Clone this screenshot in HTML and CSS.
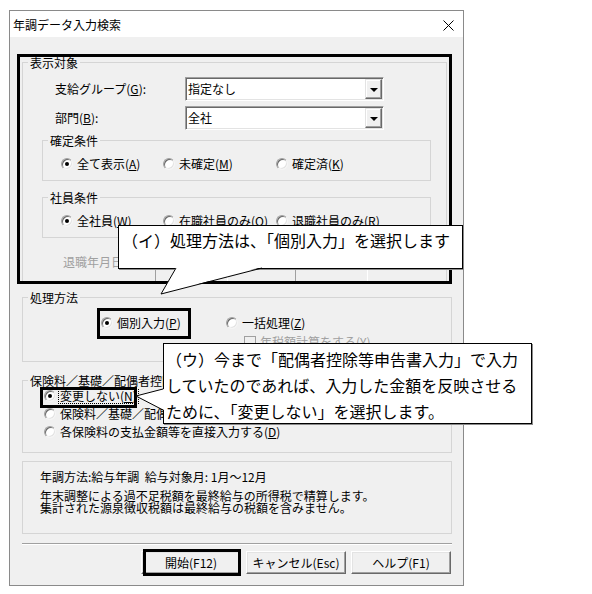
FILE: index.html
```html
<!DOCTYPE html>
<html lang="ja">
<head>
<meta charset="utf-8">
<title>年調データ入力検索</title>
<link rel="stylesheet" href="styles.css">
</head>
<body>
<div class="window">
  <div class="titlebar">
    <span class="title">年調データ入力検索</span>
    <svg class="close" width="11" height="11" viewBox="0 0 11 11"><path d="M0.5 0.5L10.5 10.5M10.5 0.5L0.5 10.5" stroke="#000" stroke-width="1" fill="none"/></svg>
  </div>
  <div class="client">
    <div class="focus-frame">
      <div class="group g-target">
        <span class="group-title">表示対象</span>
        <div class="field-row">
          <span class="field-label">支給グループ(<u>G</u>):</span>
          <div class="combo"><span class="combo-text">指定なし</span><span class="combo-btn"><i class="arrow"></i></span></div>
        </div>
        <div class="field-row row-gap">
          <span class="field-label">部門(<u>B</u>):</span>
          <div class="combo"><span class="combo-text">全社</span><span class="combo-btn"><i class="arrow"></i></span></div>
        </div>
        <div class="group sub-group sg-first">
          <span class="group-title">確定条件</span>
          <div class="radio-row">
            <span class="opt opt-a"><span class="radio checked"></span><span>全て表示(<u>A</u>)</span></span>
            <span class="opt opt-b"><span class="radio"></span><span>未確定(<u>M</u>)</span></span>
            <span class="opt"><span class="radio"></span><span>確定済(<u>K</u>)</span></span>
          </div>
        </div>
        <div class="group sub-group sg-second">
          <span class="group-title">社員条件</span>
          <div class="radio-row">
            <span class="opt opt-a"><span class="radio checked"></span><span>全社員(<u>W</u>)</span></span>
            <span class="opt opt-b"><span class="radio"></span><span>在職社員のみ(<u>Q</u>)</span></span>
            <span class="opt"><span class="radio"></span><span>退職社員のみ(<u>R</u>)</span></span>
          </div>
        </div>
        <div class="date-row">
          <span class="date-label">退職年月日</span>
          <span class="date-field"></span><span class="date-btn"></span>
          <span class="date-sep">～</span>
          <span class="date-field"></span><span class="date-btn"></span>
        </div>
      </div>
    </div>

    <div class="group g-method">
      <span class="group-title">処理方法</span>
      <div class="radio-row">
        <span class="opt opt-p"><span class="radio checked"></span><span>個別入力(<u>P</u>)</span></span>
        <span class="opt"><span class="radio"></span><span>一括処理(<u>Z</u>)</span></span>
      </div>
      <div class="check-row">
        <span class="checkbox"></span><span class="disabled">年税額計算をする(<u>Y</u>)</span>
      </div>
    </div>

    <div class="group g-ins">
      <span class="group-title">保険料／基礎／配偶者控除等の入力方法</span>
      <div class="radio-col">
        <span class="opt"><span class="radio checked"></span><span class="focus-text">変更しない(<u>N</u>)</span></span>
        <span class="opt"><span class="radio"></span><span>保険料／基礎／配偶者控除等申告書の入力内容を反映する(<u>S</u>)</span></span>
        <span class="opt"><span class="radio"></span><span>各保険料の支払金額等を直接入力する(<u>D</u>)</span></span>
      </div>
    </div>

    <div class="group g-info">
      <div class="info-line">年調方法:給与年調  給与対象月: 1月～12月</div>
      <div class="info-note">年末調整による過不足税額を最終給与の所得税で精算します。<br>集計された源泉徴収税額は最終給与の税額を含みません。</div>
    </div>

    <div class="separator"></div>

    <div class="buttons">
      <span class="btn">開始(F12)</span>
      <span class="btn">キャンセル(Esc)</span>
      <span class="btn">ヘルプ(F1)</span>
    </div>
  </div>
</div>

<div class="hl hl-p"></div>
<div class="hl hl-n"></div>
<div class="hl hl-start"></div>

<div class="callout callout-i">（イ）処理方法は、「個別入力」を選択します</div>
<svg class="tail tail-i" width="120" height="34" viewBox="0 0 120 34">
  <polygon points="21,0 6,27 107,0" fill="#fff"/>
  <polyline points="21,1 6,27 107,1" fill="none" stroke="#000" stroke-width="1"/>
</svg>

<div class="callout callout-u">（ウ）今まで「配偶者控除等申告書入力」で入力<br>していたのであれば、入力した金額を反映させる<br>ために、「変更しない」を選択します。</div>
<svg class="tail tail-u" width="32" height="30" viewBox="0 0 32 30">
  <polygon points="29,5 1,12 29,26" fill="#fff"/>
  <polyline points="28,5 1,12 28,26" fill="none" stroke="#000" stroke-width="1"/>
</svg>
</body>
</html>
```

FILE: styles.css
```css
* { box-sizing: border-box; }

html, body {
  margin: 0;
  padding: 0;
  background: #fff;
}

body {
  width: 592px;
  height: 594px;
  overflow: hidden;
  position: relative;
  font-family: "Noto Sans CJK JP", "Noto Sans", sans-serif;
  font-size: 12px;
  line-height: 16px;
  color: #000;
}

u { text-decoration: underline; text-underline-offset: 1px; }

.window {
  margin: 10px 0 0 9px;
  width: 455px;
  height: 576px;
  border: 1px solid #8a8a8a;
  background: #f0f0f0;
  display: flex;
  flex-direction: column;
}

.titlebar {
  height: 26px;
  flex-shrink: 0;
  background: #fff;
  display: flex;
  align-items: center;
  padding: 2px 0 0 3px;
}

.title { font-size: 12px; }

.close { margin-left: auto; margin-right: 9px; }

.client {
  display: flex;
  flex-direction: column;
  padding-bottom: 11px;
}

/* black highlight around 表示対象 */
.focus-frame {
  margin: 17px 0 0 7px;
  width: 435px;
  height: 230px;
  border: 3px solid #000;
  overflow: hidden;
  flex-shrink: 0;
}

.group {
  position: relative;
  border: 1px solid #d5d5d5;
}

.group-title {
  position: absolute;
  top: -8px;
  left: 5px;
  padding: 0 2px;
  background: #f0f0f0;
  line-height: 16px;
  white-space: nowrap;
}

.g-target {
  margin: 5px 2px 0 2px;
  border-bottom: none;
  padding: 14px 0 0 32px;
  height: 240px;
}

.field-row {
  display: flex;
  align-items: center;
  height: 24px;
}

.row-gap { margin-top: 5px; }

.field-label { width: 130px; flex-shrink: 0; }

.combo {
  width: 199px;
  height: 24px;
  background: #fff;
  border: 1px solid;
  border-color: #a0a0a0 #fff #fff #a0a0a0;
  box-shadow: inset 1px 1px 0 #696969, inset -1px -1px 0 #e3e3e3;
  display: flex;
  align-items: center;
  padding: 1px;
}

.combo-text { flex: 1; padding-left: 1px; }

.combo-btn {
  width: 17px;
  height: 20px;
  background: #f0f0f0;
  border: 1px solid;
  border-color: #e3e3e3 #696969 #696969 #e3e3e3;
  box-shadow: inset -1px -1px 0 #a0a0a0, inset 1px 1px 0 #fff;
  display: flex;
  align-items: center;
  justify-content: center;
}

.arrow {
  width: 0;
  height: 0;
  border-left: 4px solid transparent;
  border-right: 4px solid transparent;
  border-top: 4px solid #000;
  margin-top: 1px;
}

.sub-group {
  height: 41px;
  padding: 15px 0 0 18px;
}

.g-target .sub-group { margin-left: -13px; margin-right: 15px; }

.sg-first { margin-top: 10px; }
.sg-second { margin-top: 16px; }

.radio-row {
  display: flex;
  align-items: center;
  height: 16px;
}

.opt {
  display: flex;
  align-items: center;
  height: 16px;
  white-space: nowrap;
}

.opt-a { width: 102px; flex-shrink: 0; }
.opt-b { width: 113px; flex-shrink: 0; }

.radio {
  width: 12px;
  height: 12px;
  flex-shrink: 0;
  margin-right: 4px;
  border-radius: 50%;
  background: #fff;
  border: 1px solid;
  border-color: #a0a0a0 #f4f4f4 #f4f4f4 #a0a0a0;
  box-shadow: inset 1px 1px 0 #696969, inset -1px -1px 0 #e3e3e3;
  position: relative;
}

.radio.checked::after {
  content: "";
  position: absolute;
  left: 3px;
  top: 3px;
  width: 4px;
  height: 4px;
  border-radius: 50%;
  background: #000;
}

.date-row {
  display: flex;
  align-items: flex-start;
  margin-top: 16px;
  margin-left: 8px;
}

.date-label {
  width: 92px;
  flex-shrink: 0;
  color: #a0a0a0;
}

.date-field {
  width: 73px;
  height: 20px;
  margin-top: 14px;
  background: #f0f0f0;
  border: 1px solid;
  border-color: #a0a0a0 #fff #fff #a0a0a0;
}

.date-btn {
  width: 23px;
  height: 20px;
  margin: 14px 0 0 4px;
  background: #f0f0f0;
  border-top: 2px solid #a0a0a0;
}

.date-sep {
  width: 40px;
  text-align: center;
  color: #a0a0a0;
  visibility: hidden;
}

.g-method {
  margin: 13px 11px 0 12px;
  height: 65px;
  padding: 17px 0 0 78px;
  flex-shrink: 0;
}

.opt-p { width: 125px; flex-shrink: 0; }

.check-row {
  display: flex;
  align-items: center;
  height: 16px;
  margin: 3px 0 0 143px;
}

.checkbox {
  width: 12px;
  height: 12px;
  margin-right: 4px;
  background: #f0f0f0;
  border: 1px solid #a0a0a0;
}

.disabled { color: #a0a0a0; }

.g-ins {
  margin: 18px 11px 0 12px;
  height: 73px;
  padding: 7px 0 0 21px;
  flex-shrink: 0;
}

.radio-col {
  display: flex;
  flex-direction: column;
  gap: 2px;
}

.focus-text {
  outline: 1px dotted #000;
  padding: 0 1px;
  line-height: 14px;
  margin-left: -1px;
}

.g-info {
  margin: 8px 11px 0 12px;
  height: 73px;
  padding: 7px 0 0 17px;
  flex-shrink: 0;
}

.info-line { white-space: pre; line-height: 16px; }

.info-note {
  margin-top: 5px;
  line-height: 12px;
}

.separator {
  margin: 9px 11px 0 12px;
  height: 2px;
  border-top: 1px solid #a0a0a0;
  border-bottom: 1px solid #fff;
  flex-shrink: 0;
}

.buttons {
  margin: 6px 12px 0 0;
  display: flex;
  justify-content: flex-end;
  gap: 5px;
}

.btn {
  width: 100px;
  height: 23px;
  display: flex;
  align-items: center;
  justify-content: center;
  background: #f0f0f0;
  border: 1px solid;
  border-color: #fff #696969 #696969 #fff;
  box-shadow: inset -1px -1px 0 #a0a0a0, inset 1px 1px 0 #e3e3e3;
}

/* overlays: highlight frames and callouts */
.hl {
  position: absolute;
  border: 3px solid #000;
}

.hl-p { left: 97px; top: 308px; width: 94px; height: 31px; }
.hl-n { left: 40px; top: 387px; width: 97px; height: 21px; }
.hl-start { left: 143px; top: 549px; width: 98px; height: 27px; }

.callout {
  position: absolute;
  background: #fff;
  border: 1px solid #000;
  box-shadow: 1px 1px 0 #8a8a8a;
  font-size: 16px;
  white-space: nowrap;
}

.callout-i {
  left: 118px;
  top: 225px;
  width: 345px;
  height: 44px;
  padding: 3px 0 0 3px;
  line-height: 22px;
}

.callout-u {
  left: 163px;
  top: 343px;
  width: 369px;
  height: 81px;
  padding: 2px 0 0 2px;
  line-height: 26px;
}

.tail { position: absolute; }
.tail-i { left: 155px; top: 267px; }
.tail-u { left: 135px; top: 384px; }
```
